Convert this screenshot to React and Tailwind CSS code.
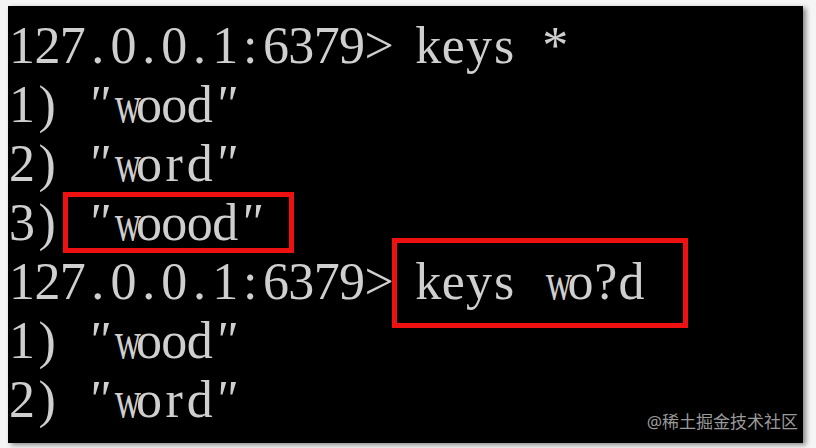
import React from "react";

const lines = [
  '127.0.0.1:6379> keys *',
  '1) "wood"',
  '2) "word"',
  '3) "woood"',
  '127.0.0.1:6379> keys wo?d',
  '1) "wood"',
  '2) "word"',
];

function Cell({ ch }) {
  if (ch === "w") {
    return (
      <span className="inline-block w-[25.4px] text-center">
        <span className="inline-block w-[25.4px] scale-x-[0.7] tracking-[-12px]">w</span>
      </span>
    );
  }
  let cls = "inline-block w-[25.4px] text-center";
  if (ch === '"') cls = "inline-block w-[25.4px] text-center italic";
  return <span className={cls}>{ch === " " ? "\u00a0" : ch}</span>;
}

function Line({ text }) {
  return (
    <div className="h-[59px] leading-[59px] whitespace-pre">
      {text.split("").map((ch, i) => (
        <Cell key={i} ch={ch} />
      ))}
    </div>
  );
}

export default function App() {
  return (
    <div className="w-[816px] h-[448px] bg-[#f5f5f5] overflow-hidden pt-[6px] pl-[8px]">
      <div className="relative w-[795px] h-[437px] bg-black shadow-[3px_2px_5px_rgba(0,0,0,0.45)] pt-[10px] pl-[1px] text-[52px] text-[#cfcfcf] font-['Liberation_Serif',serif]">
        {lines.map((t, i) => (
          <Line key={i} text={t} />
        ))}
        <div className="absolute left-[55px] top-[186px] w-[231px] h-[61px] border-[5px] border-[#ee1111]" />
        <div className="absolute left-[384px] top-[232px] w-[296px] h-[90px] border-[5px] border-[#ee1111]" />
        <div className="absolute right-[5px] top-[406px] text-[17px] leading-[20px] text-[#9a9a9a] font-['Noto_Sans','Noto_Sans_CJK_SC',sans-serif]">
          @稀土掘金技术社区
        </div>
      </div>
    </div>
  );
}
